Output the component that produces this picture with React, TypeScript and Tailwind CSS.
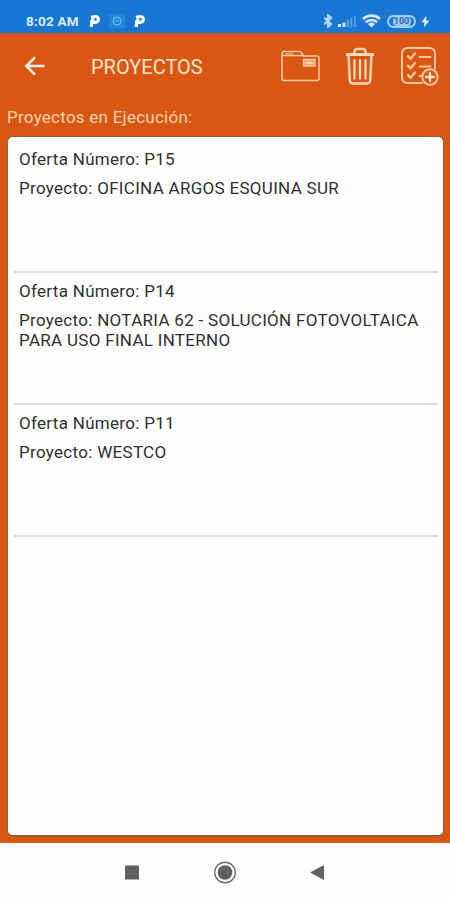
type Project = {
  offer: string;
  name: string;
};

const projects: Project[] = [
  { offer: "P15", name: "OFICINA ARGOS ESQUINA SUR" },
  { offer: "P14", name: "NOTARIA 62 - SOLUCIÓN FOTOVOLTAICA PARA USO FINAL INTERNO" },
  { offer: "P11", name: "WESTCO" },
];

function ParkingIcon() {
  return (
    <svg width="12" height="14" viewBox="0 0 12 14" fill="none" stroke="#f4faff" strokeWidth="3.200">
      <path d="M2.200 13 3 6" />
      <path d="M2.200 3.500Q4 2.500 6.500 2.500a2.900 2.900 0 0 1 0 5.800H3.500L4 4.500" strokeLinejoin="round" />
    </svg>
  );
}

function StatusBar() {
  return (
    <div className="flex h-[33px] items-start bg-[#1976d2] pl-[26px] pr-[20px] pt-[13px] text-[#dcecfb]">
      <span className="w-[54px] whitespace-nowrap text-[13.500px] font-bold leading-4 tracking-[0.2px]">8:02 AM</span>
      <div className="ml-[9px] flex items-center pt-px">
        <ParkingIcon />
        <svg className="ml-[8px]" width="16" height="14" viewBox="0 0 16 14" fill="none">
          <rect width="16" height="14" rx="1" fill="#2388db" />
          <circle cx="8" cy="7" r="4" stroke="#6cc3ec" />
          <path d="M6 7h4" stroke="#6cc3ec" />
        </svg>
        <div className="ml-[9px]">
          <ParkingIcon />
        </div>
      </div>
      <div className="ml-auto flex items-center pt-px">
        <svg width="10" height="14" viewBox="0 0 10 14" fill="none" stroke="#b7dbf8" strokeWidth="1.9">
          <path d="m1.2 3.8 7 6.2L5 13V1l3.2 3-7 6.2" />
        </svg>
        <svg className="ml-[5px]" width="18" height="14" viewBox="0 0 18 14">
          <path d="M0 10h3v3H0zM4.500 8.500h3V13h-3z" fill="#cfe7fb" />
          <path d="M9 6h2v7H9zM12.500 4h1.800v9h-1.800zM16 2h1.600v11H16z" fill="#5ba5e6" />
        </svg>
        <svg className="ml-[6px]" width="19" height="14" viewBox="0 0 19 14" fill="none" stroke="#d4eafb" strokeWidth="2.600">
          <path d="M1 5a12.500 12.500 0 0 1 17 0M3.800 8.200a8.500 8.500 0 0 1 11.400 0" />
          <path d="M9.500 13.500 6 10a5 5 0 0 1 7 0z" fill="#d4eafb" stroke="none" />
        </svg>
        <div className="ml-[6px] flex h-[13px] w-[29px] items-center justify-center rounded-full border-2 border-[#a5d0f5]">
          <span className="flex h-[9px] w-[18px] items-center justify-center rounded-sm bg-[#9ac7ee] text-[9px] font-bold leading-none text-[#2f6ca8]">
            100
          </span>
        </div>
        <svg className="ml-[5px]" width="9" height="13" viewBox="0 0 9 13">
          <path d="M5.500 0.500 0.500 7.300h3L2.800 12.500 8.500 5.500H5z" fill="#dff0fd" />
        </svg>
      </div>
    </div>
  );
}

function BackIcon() {
  return (
    <svg width="22" height="20" viewBox="0 0 22 20" fill="none" stroke="#fff0e2" strokeWidth="2.500">
      <path d="M20.500 10H2.500M11 1.300 2.300 10l8.700 8.700" />
    </svg>
  );
}

function FolderIcon() {
  return (
    <svg width="39" height="32" viewBox="0 0 39 32" fill="none" stroke="#fbcda8" strokeWidth="1.500">
      <path d="M1 29V3.500Q1 1.500 3 1.500h15.500q1.500 0 2.500 1.700l1.500 2.800H36q2 0 2 2v20.500q0 2-2 2H3q-2 0-2-1.500z" />
      <path d="M1.500 5.500h20.700" />
      <path d="M4 3.600h8" stroke="#e8a373" />
      <rect x="22.500" y="9.500" width="11.500" height="6.500" fill="#eca575" strokeWidth="1.300" />
      <path d="M24.500 12.800h8" stroke="#fbd8bb" />
    </svg>
  );
}

function TrashIcon() {
  return (
    <svg width="30" height="38" viewBox="0 0 30 38" fill="none" stroke="#fcd8b8" strokeWidth="2.400">
      <path d="M1 7.500h28" strokeWidth="3" />
      <path d="M9.300 6.500q0-4.500 3-4.500h5.400q3 0 3 4.500" />
      <path d="m3.500 8.500 1.300 25q.2 3 3.200 3h14q3 0 3.200-3l1.300-25" />
      <path d="M9.500 13.500v18M15 13.500v18M20.500 13.500v18" strokeWidth="2.300" strokeLinecap="round" />
    </svg>
  );
}

function ChecklistIcon() {
  return (
    <svg width="38" height="39" viewBox="0 0 38 39" fill="none" stroke="#fbc79d" strokeWidth="2" strokeLinecap="round">
      <path d="M21 36H7q-6 0-6-6V7q0-6 6-6h21q6 0 6 6v14.500" />
      <path d="m7 9.200 2.500 2.600L14 6.500M7 18.700l2.500 2.600L14 16M7 28.200l2.500 2.600L14 25.500" strokeWidth="2.400" />
      <path d="M18.500 10h11M18.500 19.500h11M18.500 29h2" />
      <circle cx="29" cy="30" r="7.700" fill="#d95713" />
      <path d="M29 26v8M25 30h8" strokeWidth="2.300" stroke="#ffe2c9" />
    </svg>
  );
}

function Toolbar() {
  return (
    <header className="flex h-[66px] items-center pl-[24px] pr-[11px]">
      <button type="button" aria-label="Atrás">
        <BackIcon />
      </button>
      <h1 className="ml-[45px] mt-[2px] text-[20px] leading-6 text-[#ffe6cf]">PROYECTOS</h1>
      <div className="ml-auto flex items-center">
        <button type="button" aria-label="Carpeta">
          <FolderIcon />
        </button>
        <button type="button" aria-label="Eliminar" className="ml-[25px]">
          <TrashIcon />
        </button>
        <button type="button" aria-label="Nueva tarea" className="ml-[26px]">
          <ChecklistIcon />
        </button>
      </div>
    </header>
  );
}

function ProjectRow({ project }: { project: Project }) {
  return (
    <li className="h-[132px] border-b-[2px] border-[#dcdcdc] pl-[5px] pt-[8px] text-[17px] leading-5 tracking-[0.3px] text-[#303030]">
      <p>Oferta Número: {project.offer}</p>
      <p className="mt-[9px]">Proyecto: {project.name}</p>
    </li>
  );
}

function NavigationBar() {
  return (
    <nav className="flex h-[57px] items-center justify-center bg-[#fdfdfd]">
      <svg width="204" height="24" viewBox="0 0 204 24" fill="#616161">
        <rect x="2" y="5.500" width="14" height="14" />
        <circle cx="102" cy="12.500" r="10.300" fill="none" stroke="#6f6f6f" strokeWidth="1.400" />
        <circle cx="102" cy="12.500" r="7.300" />
        <path d="M201 5v15L187 12.500z" />
      </svg>
    </nav>
  );
}

export default function App() {
  return (
    <main className="flex h-[900px] w-[450px] flex-col overflow-hidden bg-[#d95713] font-['Roboto',sans-serif]">
      <StatusBar />
      <Toolbar />
      <h2 className="h-[37px] pl-[7px] pt-[8px] text-[17px] leading-5 tracking-[0.25px] text-[#ffd3ae]">
        Proyectos en Ejecución:
      </h2>
      <section className="mb-[6px] ml-[7px] mr-[6px] flex-1 rounded-[6px] border border-b-2 border-[#93603c] bg-[#fefefe] pl-[6px] pr-[5px] pt-[4px]">
        <ul>
          {projects.map((project) => (
            <ProjectRow key={project.offer} project={project} />
          ))}
        </ul>
      </section>
      <NavigationBar />
    </main>
  );
}
